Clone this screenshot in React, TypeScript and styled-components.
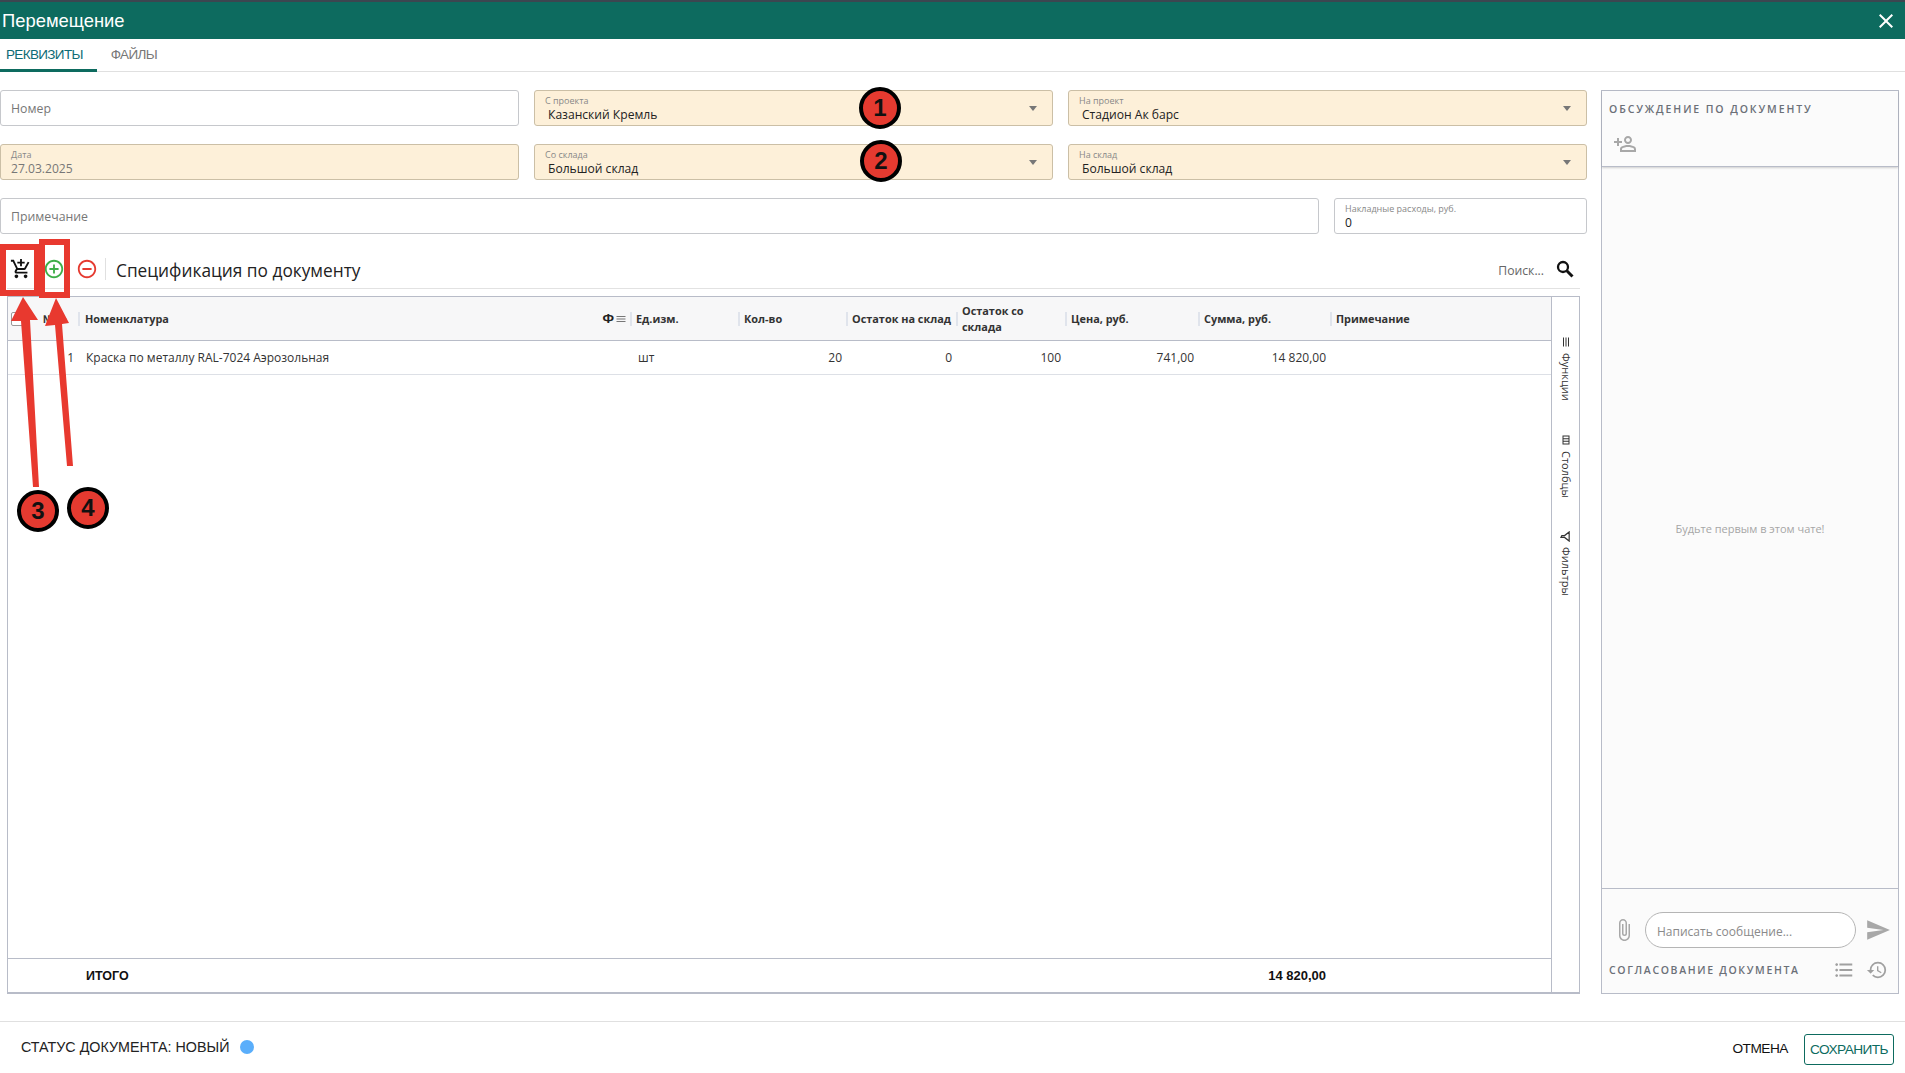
import React from 'react';
import styled, { createGlobalStyle } from 'styled-components';
import {
  MdAddCircleOutline,
  MdAddShoppingCart,
  MdClose,
  MdFormatListBulleted,
  MdHistory,
  MdOutlineAttachFile,
  MdOutlinePersonAddAlt,
  MdRemoveCircleOutline,
  MdSend,
  MdMenu,
  MdOutlineViewColumn,
  MdArrowUpward,
} from 'react-icons/md';

const GlobalStyle = createGlobalStyle`
  html, body { margin: 0; padding: 0; background: #fff; }
  body { font-family: "Open Sans", "Liberation Sans", sans-serif; color: #222; }
  * { box-sizing: border-box; }
`;

const Page = styled.div`
  position: relative;
  width: 1905px;
  height: 1073px;
  display: flex;
  flex-direction: column;
  overflow: hidden;
`;

const Header = styled.div`
  height: 39px;
  background: #0d6b5f;
  border-top: 2px solid #3c4650;
  display: flex;
  align-items: center;
  justify-content: space-between;
  padding: 0 7px 0 2px;
  color: #fff;
`;

const Title = styled.div`
  font-family: "Liberation Sans", sans-serif;
  font-size: 18.4px;
  padding-top: 1px;
`;

const Tabs = styled.div`
  height: 33px;
  display: flex;
  border-bottom: 1px solid #e0e0e0;
  font-family: "Liberation Sans", sans-serif;
  font-size: 13.5px;
  letter-spacing: -0.65px;
`;

const Tab = styled.div<{ $active?: boolean }>`
  height: 33px;
  display: flex;
  align-items: center;
  padding: 0 14px 0 ${(p) => (p.$active ? '6px' : '14px')};
  color: ${(p) => (p.$active ? '#0d6b75' : '#777')};
  border-bottom: 3px solid ${(p) => (p.$active ? '#0d6b5f' : 'transparent')};
`;

const Body = styled.div`
  flex: 1;
  display: flex;
  gap: 14px;
  padding: 18px 6px 27px 0;
`;

const LeftColumn = styled.div`
  width: 1587px;
  display: flex;
  flex-direction: column;
`;

const FieldGrid = styled.div`
  display: grid;
  grid-template-columns: repeat(3, 519px);
  gap: 18px 15px;
`;

const Field = styled.div<{ $filled?: boolean }>`
  position: relative;
  height: 36px;
  background: ${(p) => (p.$filled ? '#fdf0d9' : '#fff')};
  border: 1px solid ${(p) => (p.$filled ? '#cbbfa6' : '#c6c8cc')};
  border-radius: 3px;
  padding: 4px 10px;
  display: flex;
  flex-direction: column;
  justify-content: center;
`;

const Placeholder = styled.span`
  font-size: 12.3px;
  color: #777;
`;

const FieldLabel = styled.span`
  font-size: 9px;
  line-height: 12px;
  margin-top: 2px;
  color: #888;
`;

const FieldValue = styled.span<{ $muted?: boolean; $indent?: boolean }>`
  font-size: 12.1px;
  line-height: 16px;
  color: ${(p) => (p.$muted ? '#777' : '#222')};
  padding-left: ${(p) => (p.$indent ? '3px' : '0')};
`;

const Caret = styled.span`
  position: absolute;
  right: 15px;
  top: 15px;
  width: 0;
  height: 0;
  border-left: 4px solid transparent;
  border-right: 4px solid transparent;
  border-top: 5px solid #777;
`;

const NoteRow = styled.div`
  display: flex;
  gap: 15px;
  margin-top: 18px;
`;

const NoteField = styled(Field)`
  flex: 1;
`;

const CostField = styled(Field)`
  width: 253px;
`;

const SpecArea = styled.div`
  flex: 1;
  width: 1580px;
  display: flex;
  flex-direction: column;
  padding-left: 7px;
  margin-top: 7px;
`;

const Toolbar = styled.div`
  height: 48px;
  display: flex;
  align-items: center;
  border-bottom: 1px solid #e2e2e2;
  padding-top: 9px;
`;

const ToolIcon = styled.span<{ $color: string; $gap: number }>`
  display: flex;
  color: ${(p) => p.$color};
  font-size: 22px;
  margin-right: ${(p) => p.$gap}px;
`;

const CartIcon = styled(ToolIcon)`
  margin-left: 3px;
`;

const ToolDivider = styled.span`
  width: 1px;
  height: 22px;
  background: #e0e0e0;
  margin-right: 10px;
`;

const SpecTitle = styled.div`
  font-size: 17.3px;
  color: #222;
  flex: 1;
  padding-top: 2px;
`;

const SearchText = styled.span`
  font-size: 12.2px;
  color: #666;
  margin-right: 12px;
  padding-top: 2px;
`;

const SearchIcon = styled.svg`
  margin-right: 6px;
  flex: none;
`;

const GridBox = styled.div`
  margin-top: 7px;
  flex: 1;
  display: flex;
  border: 1px solid #b8bcc8;
  border-bottom-width: 2px;
`;

const GridMain = styled.div`
  flex: 1;
  display: flex;
  flex-direction: column;
`;

const gridColumns = '70px 552px 108px 108px 110px 109px 133px 132px 1fr';

const HeaderRow = styled.div`
  height: 44px;
  display: grid;
  grid-template-columns: ${gridColumns};
  background: #f7f7f8;
  border-bottom: 1px solid #b8bcc8;
  align-items: center;
  font-size: 10.9px;
  font-weight: 700;
  color: #333;
`;

const HeadCell = styled.div<{ $wide?: boolean }>`
  position: relative;
  display: flex;
  align-items: center;
  justify-content: space-between;
  line-height: 16px;
  padding: 0 2px 0 ${(p) => (p.$wide ? '7px' : '6px')};
  white-space: pre-line;
  &::before {
    content: '';
    position: absolute;
    left: 0;
    top: 50%;
    margin-top: -7px;
    width: 2px;
    height: 14px;
    background: #e0e4ec;
  }
`;

const SelectCell = styled.div`
  display: flex;
  align-items: center;
  padding-left: 3px;
`;

const Checkbox = styled.span`
  width: 14px;
  height: 14px;
  border: 1px solid #999;
  background: #fff;
  border-radius: 2px;
`;

const NumberMark = styled.span`
  margin-left: 18px;
`;

const SortIcon = styled.span`
  display: flex;
  font-size: 14px;
  color: #555;
  margin-left: 1px;
`;

const HeadTools = styled.span`
  display: flex;
  align-items: center;
  gap: 1px;
  margin-right: 1px;
`;

const PhiMark = styled.span`
  font-family: "Liberation Sans", sans-serif;
  font-size: 13.5px;
  color: #222;
`;

const BodyRows = styled.div`
  flex: 1;
`;

const DataRow = styled.div`
  height: 34px;
  display: grid;
  grid-template-columns: ${gridColumns};
  align-items: center;
  border-bottom: 1px solid #dde0e6;
  font-size: 12px;
  color: #333;
`;

const Cell = styled.div<{ $right?: boolean }>`
  padding: 0 4px 0 8px;
  text-align: ${(p) => (p.$right ? 'right' : 'left')};
  white-space: nowrap;
`;

const TotalRow = styled.div`
  height: 34px;
  display: grid;
  grid-template-columns: ${gridColumns};
  align-items: center;
  border-top: 1px solid #b8bcc8;
  font-family: "Liberation Sans", sans-serif;
  font-size: 13px;
  font-weight: 700;
  color: #111;
`;

const TotalLabel = styled(Cell)`
  grid-column: 2;
  font-size: 12.5px;
`;

const TotalSum = styled(Cell)`
  grid-column: 8;
`;

const SidePanel = styled.div`
  width: 28px;
  border-left: 1px solid #b8bcc8;
  display: flex;
  flex-direction: column;
  gap: 34.5px;
  padding-top: 39px;
  align-items: center;
`;

const SideTab = styled.div`
  height: 63px;
  writing-mode: vertical-rl;
  display: flex;
  align-items: center;
  gap: 5px;
  font-size: 11px;
  line-height: 12px;
  color: #333;
  white-space: nowrap;
  svg {
    transform: rotate(90deg);
    font-size: 12px;
    flex: none;
  }
`;

const ChatPanel = styled.div`
  width: 298px;
  height: 904px;
  background: #fbfbfb;
  border: 1px solid #b8bcc8;
  display: flex;
  flex-direction: column;
`;

const ChatHead = styled.div`
  height: 76px;
  border-bottom: 1px solid #b8bcc8;
  box-shadow: 0 1px 2px rgba(0, 0, 0, 0.18);
  padding: 11px 7px 0;
`;

const SectionLabel = styled.div`
  font-size: 10.5px;
  font-weight: 600;
  letter-spacing: 1.9px;
  color: #6b7078;
  white-space: nowrap;
`;

const AddUser = styled.div`
  display: flex;
  margin: 16px 0 0 4px;
  font-size: 24px;
  color: #a8a8a8;
  svg {
    transform: scaleX(-1);
  }
`;

const ChatEmpty = styled.div`
  flex: 1;
  display: flex;
  align-items: center;
  justify-content: center;
  padding-top: 2px;
  font-size: 11px;
  color: #a6a6a6;
`;

const Composer = styled.div`
  height: 105px;
  border-top: 1px solid #b8bcc8;
  padding: 23px 7px 0 7px;
`;

const InputRow = styled.div`
  display: flex;
  align-items: center;
  gap: 9px;
`;

const ClipIcon = styled.span`
  display: flex;
  font-size: 24px;
  color: #a8a8a8;
  margin-left: 3px;
`;

const MessageInput = styled.div`
  width: 211px;
  height: 36px;
  border: 1px solid #b5b5b5;
  border-radius: 18px;
  background: #fff;
  display: flex;
  align-items: center;
  padding: 2px 0 0 11px;
  font-size: 12px;
  color: #8a8a8a;
`;

const SendIcon = styled.span`
  display: flex;
  font-size: 26px;
  color: #a8a8a8;
`;

const ApprovalRow = styled.div`
  display: flex;
  align-items: center;
  margin-top: 11px;
  padding-right: 3px;
`;

const ApprovalLabel = styled(SectionLabel)`
  flex: 1;
  letter-spacing: 1.65px;
`;

const ApprovalIcon = styled.span`
  display: flex;
  font-size: 22px;
  color: #a0a0a0;
  margin-left: 11px;
`;

const Footer = styled.div`
  height: 52px;
  border-top: 1px solid #e0e0e0;
  display: flex;
  align-items: center;
  padding: 0 11px 2px 21px;
  font-family: "Liberation Sans", sans-serif;
  font-size: 14.3px;
`;

const StatusText = styled.span`
  color: #222;
`;

const StatusDot = styled.span`
  width: 14px;
  height: 14px;
  border-radius: 50%;
  background: #5aaefb;
  margin-left: 11px;
`;

const FooterSpacer = styled.div`
  flex: 1;
`;

const CancelButton = styled.span`
  color: #111;
  margin: 3px 16px 0 0;
  font-size: 13.7px;
  letter-spacing: -0.5px;
`;

const SaveButton = styled.span`
  width: 90px;
  height: 31px;
  margin-top: 5px;
  border: 1px solid #0d6b5f;
  border-radius: 3px;
  color: #0d6b5f;
  font-size: 13.7px;
  letter-spacing: -0.6px;
  display: flex;
  align-items: center;
  justify-content: center;
`;

/* red markup drawn over the screenshot */
const Markup = styled.svg`
  position: absolute;
  left: 0;
  top: 0;
  pointer-events: none;
`;

const Badge = styled.div<{ $x: number; $y: number }>`
  position: absolute;
  left: ${(p) => p.$x}px;
  top: ${(p) => p.$y}px;
  width: 42px;
  height: 42px;
  border-radius: 50%;
  background: #e53a30;
  border: 4px solid #000;
  display: flex;
  align-items: center;
  justify-content: center;
  font-family: "Liberation Sans", sans-serif;
  font-size: 24px;
  font-weight: 700;
  color: #111;
`;

const columns = ['Ед.изм.', 'Кол-во', 'Остаток на склад', 'Остаток со\nсклада', 'Цена, руб.', 'Сумма, руб.', 'Примечание'];

export default function App() {
  return (
    <Page>
      <GlobalStyle />
      <Header>
        <Title>Перемещение</Title>
        <MdClose size={24} />
      </Header>
      <Tabs>
        <Tab $active>РЕКВИЗИТЫ</Tab>
        <Tab>ФАЙЛЫ</Tab>
      </Tabs>
      <Body>
        <LeftColumn>
          <FieldGrid>
            <Field>
              <Placeholder>Номер</Placeholder>
            </Field>
            <Field $filled>
              <FieldLabel>С проекта</FieldLabel>
              <FieldValue $indent>Казанский Кремль</FieldValue>
              <Caret />
            </Field>
            <Field $filled>
              <FieldLabel>На проект</FieldLabel>
              <FieldValue $indent>Стадион Ак барс</FieldValue>
              <Caret />
            </Field>
            <Field $filled>
              <FieldLabel>Дата</FieldLabel>
              <FieldValue $muted>27.03.2025</FieldValue>
            </Field>
            <Field $filled>
              <FieldLabel>Со склада</FieldLabel>
              <FieldValue $indent>Большой склад</FieldValue>
              <Caret />
            </Field>
            <Field $filled>
              <FieldLabel>На склад</FieldLabel>
              <FieldValue $indent>Большой склад</FieldValue>
              <Caret />
            </Field>
          </FieldGrid>
          <NoteRow>
            <NoteField>
              <Placeholder>Примечание</Placeholder>
            </NoteField>
            <CostField>
              <FieldLabel>Накладные расходы, руб.</FieldLabel>
              <FieldValue>0</FieldValue>
            </CostField>
          </NoteRow>
          <SpecArea>
            <Toolbar>
              <CartIcon $color="#111" $gap={11}>
                <MdAddShoppingCart />
              </CartIcon>
              <ToolIcon $color="#3fae49" $gap={11}>
                <MdAddCircleOutline />
              </ToolIcon>
              <ToolIcon $color="#e53a30" $gap={7}>
                <MdRemoveCircleOutline />
              </ToolIcon>
              <ToolDivider />
              <SpecTitle>Спецификация по документу</SpecTitle>
              <SearchText>Поиск...</SearchText>
              <SearchIcon width="18" height="18" viewBox="0 0 18 18" fill="none" stroke="#111">
                <circle cx="7" cy="7" r="5" strokeWidth="2.3" />
                <path d="M10.8 10.8L16.5 16.5" strokeWidth="3" />
              </SearchIcon>
            </Toolbar>
            <GridBox>
              <GridMain>
                <HeaderRow>
                  <SelectCell>
                    <Checkbox />
                    <NumberMark>№</NumberMark>
                    <SortIcon>
                      <MdArrowUpward />
                    </SortIcon>
                  </SelectCell>
                  <HeadCell $wide>
                    Номенклатура
                    <HeadTools>
                      <PhiMark>Ф</PhiMark>
                      <MdMenu size={12} color="#777" />
                    </HeadTools>
                  </HeadCell>
                  {columns.map((c) => (
                    <HeadCell key={c}>{c}</HeadCell>
                  ))}
                </HeaderRow>
                <BodyRows>
                  <DataRow>
                    <Cell $right>1</Cell>
                    <Cell>Краска по металлу RAL-7024 Аэрозольная</Cell>
                    <Cell>шт</Cell>
                    <Cell $right>20</Cell>
                    <Cell $right>0</Cell>
                    <Cell $right>100</Cell>
                    <Cell $right>741,00</Cell>
                    <Cell $right>14 820,00</Cell>
                    <Cell />
                  </DataRow>
                </BodyRows>
                <TotalRow>
                  <TotalLabel>ИТОГО</TotalLabel>
                  <TotalSum $right>14 820,00</TotalSum>
                </TotalRow>
              </GridMain>
              <SidePanel>
                <SideTab>
                  <MdMenu />
                  Функции
                </SideTab>
                <SideTab>
                  <MdOutlineViewColumn />
                  Столбцы
                </SideTab>
                <SideTab>
                  <svg width="11" height="11" viewBox="0 0 12 12" fill="none" stroke="#333" strokeWidth="1.3">
                    <path d="M1 2h10L7 7v4L5 10V7z" />
                  </svg>
                  Фильтры
                </SideTab>
              </SidePanel>
            </GridBox>
          </SpecArea>
        </LeftColumn>
        <ChatPanel>
          <ChatHead>
            <SectionLabel>ОБСУЖДЕНИЕ ПО ДОКУМЕНТУ</SectionLabel>
            <AddUser>
              <MdOutlinePersonAddAlt />
            </AddUser>
          </ChatHead>
          <ChatEmpty>Будьте первым в этом чате!</ChatEmpty>
          <Composer>
            <InputRow>
              <ClipIcon>
                <MdOutlineAttachFile />
              </ClipIcon>
              <MessageInput>Написать сообщение...</MessageInput>
              <SendIcon>
                <MdSend />
              </SendIcon>
            </InputRow>
            <ApprovalRow>
              <ApprovalLabel>СОГЛАСОВАНИЕ ДОКУМЕНТА</ApprovalLabel>
              <ApprovalIcon>
                <MdFormatListBulleted />
              </ApprovalIcon>
              <ApprovalIcon>
                <MdHistory />
              </ApprovalIcon>
            </ApprovalRow>
          </Composer>
        </ChatPanel>
      </Body>
      <Footer>
        <StatusText>СТАТУС ДОКУМЕНТА: НОВЫЙ</StatusText>
        <StatusDot />
        <FooterSpacer />
        <CancelButton>ОТМЕНА</CancelButton>
        <SaveButton>СОХРАНИТЬ</SaveButton>
      </Footer>
      <Markup width="1905" height="1073" viewBox="0 0 1905 1073">
        <g fill="none" stroke="#e8392f" strokeWidth="6">
          <rect x="3" y="247" width="34" height="46" />
          <rect x="42" y="242" width="25" height="53" />
        </g>
        <g fill="#e8392f">
          <path d="M23 297L11 321L21 321L33 487L39 487L30 320L38 320Z" />
          <path d="M56 298L45 326L55 325L67 466L73 466L62 324L69 323Z" />
        </g>
      </Markup>
      <Badge $x={859} $y={87}>1</Badge>
      <Badge $x={860} $y={140}>2</Badge>
      <Badge $x={17} $y={490}>3</Badge>
      <Badge $x={67} $y={487}>4</Badge>
    </Page>
  );
}
